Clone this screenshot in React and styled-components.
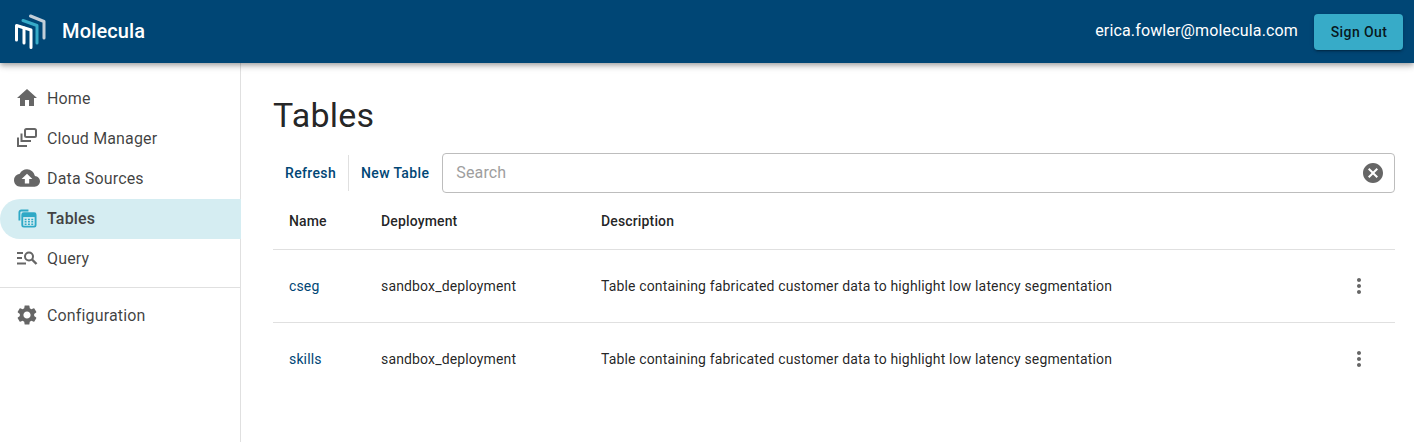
import React from "react";
import styled, { createGlobalStyle } from "styled-components";
import { MdHome, MdCloudUpload, MdSettings, MdCancel, MdMoreVert } from "react-icons/md";

const GlobalStyle = createGlobalStyle`
  html, body { margin: 0; padding: 0; height: 100%; background: #fff; }
  body { font-family: Roboto, "Liberation Sans", sans-serif; color: rgba(0, 0, 0, 0.87); }
  #root { height: 100%; }
`;

const Page = styled.div`
  height: 442px;
  display: flex;
  flex-direction: column;
  overflow: hidden;
`;

/* ===== TOP BAR ===== */
const TopBar = styled.header`
  height: 63px;
  flex: none;
  background: #004675;
  display: flex;
  align-items: center;
  justify-content: space-between;
  padding: 0 11px 0 14px;
  box-shadow: 0 2px 4px -1px rgba(0, 0, 0, 0.2), 0 4px 5px rgba(0, 0, 0, 0.14), 0 1px 10px rgba(0, 0, 0, 0.12);
  position: relative;
  z-index: 2;
`;

const Brand = styled.div`
  display: flex;
  align-items: center;
  gap: 14px;
  color: #fff;
  font-size: 20px;
  font-weight: 500;
  letter-spacing: 0.15px;
`;

const BrandName = styled.span`
  margin-bottom: 2px;
`;

const UserArea = styled.div`
  display: flex;
  align-items: center;
  gap: 16px;
  color: #fff;
  font-size: 16px;
  letter-spacing: 0.15px;
`;

const UserEmail = styled.span`
  margin-bottom: 2px;
`;

const SignOut = styled.button`
  width: 89px;
  height: 36px;
  border: none;
  border-radius: 4px;
  background: #37abc8;
  color: rgba(0, 0, 0, 0.87);
  font: 500 14px Roboto, sans-serif;
  letter-spacing: 0.4px;
  padding: 0 0 0 1px;
  box-shadow: 0 3px 1px -2px rgba(0, 0, 0, 0.2), 0 2px 2px rgba(0, 0, 0, 0.14), 0 1px 5px rgba(0, 0, 0, 0.12);
`;

/* ===== BODY ===== */
const Body = styled.div`
  flex: 1;
  display: flex;
  min-height: 0;
`;

const Sidebar = styled.nav`
  width: 240px;
  flex: none;
  border-right: 1px solid #e0e0e0;
  padding-top: 16px;
`;

const NavItem = styled.div`
  height: 40px;
  box-sizing: border-box;
  display: flex;
  align-items: center;
  gap: 9px;
  padding: 0 0 2px 16px;
  margin-right: -1px;
  font-size: 16px;
  letter-spacing: 0.15px;
  font-weight: ${(p) => (p.$active ? 500 : 400)};
  color: ${(p) => (p.$active ? "#424242" : "rgba(0, 0, 0, 0.75)")};
  background: ${(p) => (p.$active ? "#d5edf2" : "transparent")};
  border-top-left-radius: ${(p) => (p.$active ? "20px" : "0")};
  border-bottom-left-radius: ${(p) => (p.$active ? "20px" : "0")};
`;

const NavIcon = styled.span`
  width: 22px;
  height: 24px;
  display: flex;
  align-items: center;
  justify-content: center;
  color: #666;
  svg { display: block; flex: none; }
`;

const NavDivider = styled.hr`
  border: none;
  border-top: 1px solid #e0e0e0;
  margin: 8px 0;
`;

const Content = styled.main`
  flex: 1;
  min-width: 0;
  padding: 31px 19px 0 32px;
`;

const Title = styled.h1`
  margin: 0;
  font-size: 34px;
  font-weight: 400;
  line-height: 42px;
  letter-spacing: 0.25px;
  color: rgba(0, 0, 0, 0.87);
`;

const Toolbar = styled.div`
  display: flex;
  align-items: center;
  margin-top: 17px;
  height: 40px;
`;

const TextAction = styled.button`
  border: none;
  background: none;
  padding: 0 12px;
  height: 36px;
  font: 500 14px Roboto, sans-serif;
  letter-spacing: 0.35px;
  color: #004675;
  white-space: nowrap;
`;

const ToolDivider = styled.span`
  width: 1px;
  height: 36px;
  background: #e0e0e0;
`;

const SearchBox = styled.div`
  flex: 1;
  height: 40px;
  box-sizing: border-box;
  margin-left: 1px;
  border: 1px solid #bdbdbd;
  border-radius: 4px;
  display: flex;
  align-items: center;
  justify-content: space-between;
  padding: 0 9px 0 13px;
  color: #9e9e9e;
  font-size: 16px;
  letter-spacing: 0.15px;
`;

const Placeholder = styled.span`
  margin-bottom: 2px;
`;

const Table = styled.div`
  font-size: 14px;
  letter-spacing: 0.15px;
`;

const Row = styled.div`
  display: grid;
  grid-template-columns: 92px 220px 1fr 72px;
  align-items: center;
  height: ${(p) => (p.$head ? "56px" : "72px")};
  box-sizing: content-box;
  padding-left: 16px;
  border-bottom: ${(p) => (p.$last ? "none" : "1px solid #e0e0e0")};
  font-weight: ${(p) => (p.$head ? 500 : 400)};
  color: rgba(0, 0, 0, 0.87);
`;

const NameLink = styled.a`
  color: #004675;
`;

const RowMenu = styled.span`
  display: flex;
  justify-content: center;
  color: #666;
`;

/* ===== DRAWN ICONS ===== */
const Logo = () => (
  <svg width="34" height="37" viewBox="14 13 34 37" fill="none" strokeWidth="3" strokeLinecap="round" strokeLinejoin="round">
    <path d="M30.5 16 L44 21.5 V38" stroke="#c3cfd9" />
    <path d="M23 20.5 L37 25.5 V43" stroke="#37abc8" />
    <path d="M16.5 40 V25.5 L31 30 V47.5" stroke="#fff" />
    <path d="M24 28 V43" stroke="#fff" />
  </svg>
);

const CloudManagerIcon = () => (
  <svg width="22" height="22" viewBox="0 0 22 22" fill="none" stroke="#666" strokeWidth="2">
    <rect x="9" y="2" width="11" height="8" rx="1.5" />
    <path d="M5.5 6.5 V14 H15" />
    <path d="M2 10.5 V19 H11" />
  </svg>
);

const TablesIcon = () => (
  <svg width="19" height="19" viewBox="0 0 20 20" fill="none">
    <path d="M11 1.5 H3.5 A2 2 0 0 0 1.5 3.5 V12" stroke="#2fa9c6" strokeWidth="2" />
    <rect x="4.5" y="4.5" width="14" height="14" rx="1.5" stroke="#2fa9c6" strokeWidth="2" />
    <rect x="4.5" y="4.5" width="14" height="4" fill="#2fa9c6" />
    <path d="M7 11 h2 M10.5 11 h2 M14 11 h2 M7 13.5 h2 M10.5 13.5 h2 M14 13.5 h2 M7 16 h2 M10.5 16 h2 M14 16 h2" stroke="#2fa9c6" strokeWidth="1.6" />
  </svg>
);

const QueryIcon = () => (
  <svg width="22" height="16" viewBox="0 0 22 16" fill="none" stroke="#666">
    <path d="M1 3 H7 M1 8 H6 M1 13.5 H10" strokeWidth="1.8" />
    <circle cx="13" cy="6.5" r="4" strokeWidth="2" />
    <path d="M16 9.5 L20.5 14" strokeWidth="2.4" />
  </svg>
);

const navItems = [
  { label: "Home", icon: <MdHome size={24} /> },
  { label: "Cloud Manager", icon: <CloudManagerIcon /> },
  { label: "Data Sources", icon: <MdCloudUpload size={26} /> },
  { label: "Tables", icon: <TablesIcon />, active: true },
  { label: "Query", icon: <QueryIcon /> },
];

const description = "Table containing fabricated customer data to highlight low latency segmentation";

const rows = [
  { name: "cseg", deployment: "sandbox_deployment", description },
  { name: "skills", deployment: "sandbox_deployment", description, last: true },
];

export default function App() {
  return (
    <Page>
      <GlobalStyle />
      <TopBar>
        <Brand>
          <Logo />
          <BrandName>Molecula</BrandName>
        </Brand>
        <UserArea>
          <UserEmail>erica.fowler@molecula.com</UserEmail>
          <SignOut>Sign Out</SignOut>
        </UserArea>
      </TopBar>
      <Body>
        <Sidebar>
          {navItems.map((item) => (
            <NavItem key={item.label} $active={item.active}>
              <NavIcon>{item.icon}</NavIcon>
              {item.label}
            </NavItem>
          ))}
          <NavDivider />
          <NavItem>
            <NavIcon><MdSettings size={24} /></NavIcon>
            Configuration
          </NavItem>
        </Sidebar>
        <Content>
          <Title>Tables</Title>
          <Toolbar>
            <TextAction>Refresh</TextAction>
            <ToolDivider />
            <TextAction>New Table</TextAction>
            <SearchBox>
              <Placeholder>Search</Placeholder>
              <MdCancel size={24} color="#666" />
            </SearchBox>
          </Toolbar>
          <Table>
            <Row $head>
              <span>Name</span>
              <span>Deployment</span>
              <span>Description</span>
              <span />
            </Row>
            {rows.map((r) => (
              <Row key={r.name} $last={r.last}>
                <NameLink>{r.name}</NameLink>
                <span>{r.deployment}</span>
                <span>{r.description}</span>
                <RowMenu><MdMoreVert size={24} /></RowMenu>
              </Row>
            ))}
          </Table>
        </Content>
      </Body>
    </Page>
  );
}
